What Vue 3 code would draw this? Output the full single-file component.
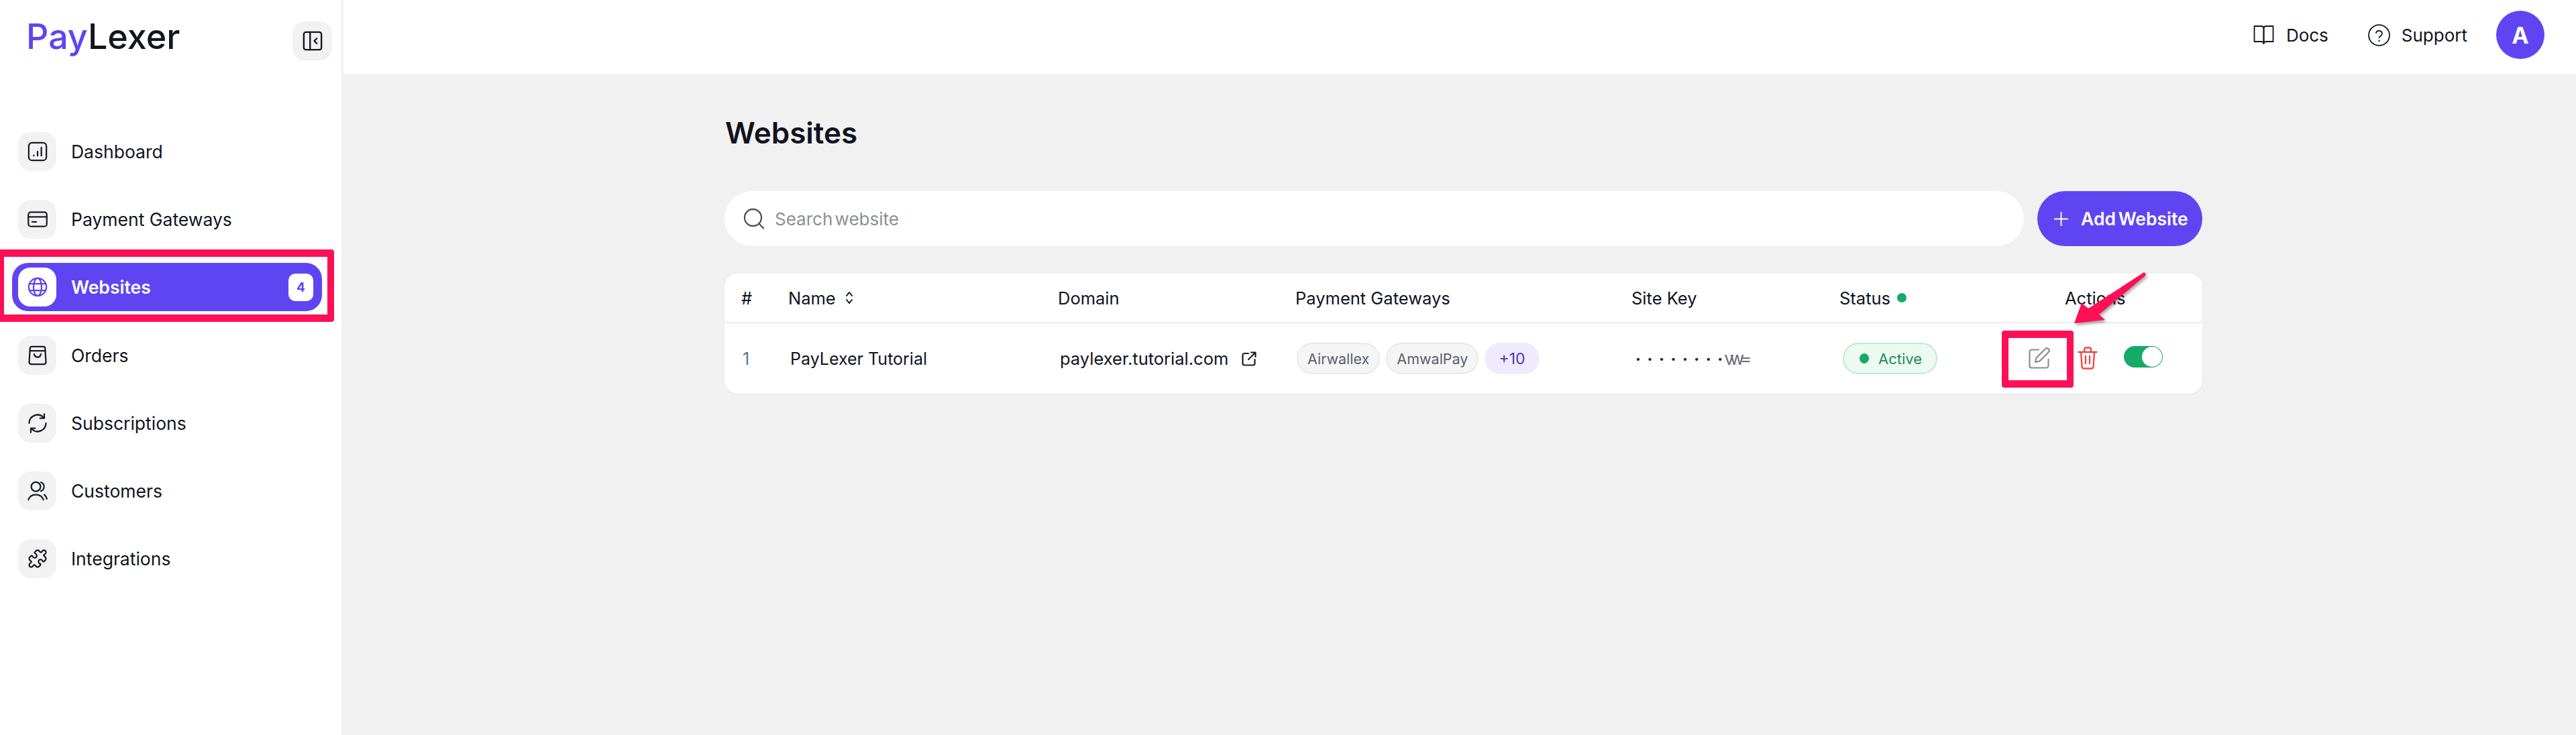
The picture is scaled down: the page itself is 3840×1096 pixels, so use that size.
<script setup>
const navItems = [
  { label: 'Dashboard', icon: 'dash' },
  { label: 'Payment Gateways', icon: 'card' },
  { label: 'Websites', icon: 'globe', active: true, badge: 4 },
  { label: 'Orders', icon: 'bag' },
  { label: 'Subscriptions', icon: 'sync' },
  { label: 'Customers', icon: 'users' },
  { label: 'Integrations', icon: 'puzzle' }
]
</script>

<template>
  <div class="page">
    <aside class="sidebar">
      <div class="brand">
        <div class="logo"><span class="pay">Pay</span>Lexer</div>
        <button class="collapse">
          <svg class="ic30" viewBox="0 0 24 24" fill="none" stroke="currentColor" stroke-width="1.9" stroke-linejoin="round" stroke-linecap="round">
            <rect x="1.5" y="1.5" width="21" height="21" rx="2.5" />
            <path d="M9 1.5v21M17 9l-3 3 3 3" />
          </svg>
        </button>
      </div>
      <nav class="nav">
        <a v-for="item in navItems" :key="item.label" class="nav-item" :class="{ active: item.active }">
          <span class="nav-icon">
            <svg class="ic30" viewBox="0 0 24 24" fill="none" stroke="currentColor" stroke-width="1.8" stroke-linecap="round" stroke-linejoin="round">
              <template v-if="item.icon === 'dash'">
                <rect x="1.5" y="1.5" width="21" height="21" rx="4" />
                <path d="M7.5 17v-.5M12 17v-5M16.5 17V7" />
              </template>
              <template v-else-if="item.icon === 'card'">
                <rect x="1" y="3.5" width="22" height="17" rx="3" />
                <path d="M1 9h22M5.5 15h5" />
              </template>
              <template v-else-if="item.icon === 'globe'">
                <circle cx="12" cy="12" r="10.5" />
                <ellipse cx="12" cy="12" rx="4.8" ry="10.5" />
                <path d="M2.3 8h19.4M2.3 16h19.4" />
              </template>
              <template v-else-if="item.icon === 'bag'">
                <path d="M5 1.5h14a2 2 0 0 1 2 2v.5l1 16a2.5 2.5 0 0 1-2.5 2.5h-15A2.5 2.5 0 0 1 2 20l1-16v-.5a2 2 0 0 1 2-2z" />
                <path d="M3 6.5h18M8 10.5c.6 2.4 2 3.5 4 3.5s3.4-1.100 4-3.500" />
              </template>
              <template v-else-if="item.icon === 'sync'">
                <path d="M2 12a10 10 0 0 1 17-7M22 12a10 10 0 0 1-17 7" />
                <path d="M20 1v5h-5M4 23v-5h5" />
              </template>
              <template v-else-if="item.icon === 'users'">
                <circle cx="10" cy="7" r="5.5" />
                <path d="M16 1.800a5.500 5.500 0 0 1 0 10.400M1 22.500c1.500-4 5-6 9-6s7.500 2 9 6M20 16.500c1.500 1.200 2.500 3 3 5" />
              </template>
              <template v-else>
                <path d="M19.439 7.850c-.049.322.059.648.289.878l1.568 1.568c.47.47.706 1.087.706 1.704s-.235 1.233-.706 1.704l-1.611 1.611a.98.98 0 0 1-.837.276c-.47-.07-.802-.48-.968-.925a2.501 2.501 0 1 0-3.214 3.214c.446.166.855.497.925.968a.979.979 0 0 1-.276.837l-1.610 1.610a2.404 2.404 0 0 1-1.705.707 2.402 2.402 0 0 1-1.704-.706l-1.568-1.568a1.026 1.026 0 0 0-.877-.29c-.493.074-.84.504-1.020.968a2.500 2.500 0 1 1-3.237-3.237c.464-.18.894-.527.967-1.020a1.026 1.026 0 0 0-.289-.877l-1.568-1.568A2.402 2.402 0 0 1 1.998 12c0-.617.236-1.234.706-1.704L4.230 8.770c.24-.24.581-.353.917-.303.515.077.877.528 1.073 1.010a2.500 2.500 0 1 0 3.259-3.259c-.482-.196-.933-.558-1.010-1.073-.05-.336.062-.676.303-.917l1.525-1.525A2.402 2.402 0 0 1 12 1.998c.617 0 1.234.236 1.704.706l1.568 1.568c.23.23.556.338.877.29.493-.074.84-.504 1.020-.968a2.500 2.500 0 1 1 3.237 3.237c-.464.18-.894.527-.967 1.020Z" />
              </template>
            </svg>
          </span>
          <span class="nav-label">{{ item.label }}</span>
          <span v-if="item.badge" class="nav-badge">{{ item.badge }}</span>
        </a>
      </nav>
      <div class="mark mark-nav"></div>
    </aside>

    <div class="right">
      <header class="topbar">
        <a class="top-link">
          <svg class="book" viewBox="0 0 30 30" fill="none" stroke="currentColor" stroke-width="1.8" stroke-linejoin="round" stroke-linecap="round">
            <path d="M1 2h10c2.500 0 4 1.500 4 3.500V28c0-1.500-1.500-3-4-3H1z" />
            <path d="M29 2H19c-2.500 0-4 1.500-4 3.500V28c0-1.500 1.500-3 4-3h10z" />
          </svg>
          Docs
        </a>
        <a class="top-link">
          <svg class="help" viewBox="0 0 32 32" fill="none" stroke="currentColor" stroke-width="1.700" stroke-linecap="round" stroke-linejoin="round">
            <circle cx="16" cy="16" r="15" />
            <path d="M11.500 12.500a4.600 4.600 0 0 1 8.900 1.400c0 3-4.400 3.700-4.400 5.600" />
            <path d="M16 24v.2" stroke-width="2.200" />
          </svg>
          Support
        </a>
        <div class="avatar">A</div>
      </header>

      <main class="content">
        <h1 class="title">Websites</h1>
        <div class="toolbar">
          <div class="search">
            <svg class="search-ic" viewBox="0 0 32 32" fill="none" stroke="currentColor" stroke-width="2.300" stroke-linecap="round">
              <circle cx="14.500" cy="14.500" r="12.500" />
              <path d="M24 24l6 6.500" />
            </svg>
            <span class="placeholder">Search website</span>
          </div>
          <button class="add">
            <svg class="plus" viewBox="0 0 22 22" fill="none" stroke="currentColor" stroke-width="2"><path d="M11 0v22M0 11h22" /></svg>
            Add Website
          </button>
        </div>

        <section class="table">
          <div class="thead">
            <span>#</span>
            <span class="name-h">Name
              <svg class="sort" viewBox="0 0 12 20" fill="none" stroke="currentColor" stroke-width="2" stroke-linecap="round" stroke-linejoin="round"><path d="M2 7l4-5 4 5M2 13l4 5 4-5" /></svg>
            </span>
            <span>Domain</span>
            <span>Payment Gateways</span>
            <span>Site Key</span>
            <span class="status-h">Status <i class="dot"></i></span>
            <span>Actions</span>
          </div>
          <div class="trow">
            <span class="idx">1</span>
            <span>PayLexer Tutorial</span>
            <span class="domain">paylexer.tutorial.com
              <svg class="ext" viewBox="0 0 22 22" fill="none" stroke="currentColor" stroke-width="2.200" stroke-linecap="round" stroke-linejoin="round">
                <path d="M10 3H4a2.500 2.500 0 0 0-2.500 2.500V18A2.500 2.500 0 0 0 4 20.500h13a2.500 2.500 0 0 0 2.500-2.500v-6" />
                <path d="M10 12L20 2M14 1.500h6.500V8" />
              </svg>
            </span>
            <span class="chips">
              <span class="chip">Airwallex</span>
              <span class="chip">AmwalPay</span>
              <span class="chip more">+10</span>
            </span>
            <span class="key">
              <span class="key-dots">•••••••</span><span class="key-last">•</span><span class="key-end">vw=</span>
            </span>
            <span><span class="active-chip"><i class="adot"></i>Active</span></span>
            <span class="actions">
              <svg class="edit" viewBox="0 0 32 32" fill="none" stroke="currentColor" stroke-width="2.100" stroke-linecap="round" stroke-linejoin="round">
                <path d="M15 3.500H4.500a3 3 0 0 0-3 3v21a3 3 0 0 0 3 3h22a3 3 0 0 0 3-3V18" />
                <path d="M25 2.200a3.400 3.400 0 0 1 4.800 4.800L16.500 20.500l-6.500 1.600 1.600-6.500z" />
              </svg>
              <svg class="trash" viewBox="0 0 30 34" fill="none" stroke="currentColor" stroke-width="2.300" stroke-linecap="round" stroke-linejoin="round">
                <path d="M1.500 8h27M10 8V4a2.500 2.500 0 0 1 2.500-2.500h5A2.500 2.500 0 0 1 20 4v4M5 8l1.500 22a3 3 0 0 0 3 2.500h11a3 3 0 0 0 3-2.500L25 8M12 14v11M18 14v11" />
              </svg>
              <span class="toggle"><i class="knob"></i></span>
            </span>
          </div>
        </section>
      </main>

      <div class="mark mark-edit"></div>
      <svg class="arrow" viewBox="0 0 120 90">
        <path class="arrow-shape" d="M4 80 L15 50 L25 58 L108 4 Q112 6 110 9 L41 67 L50 75 Z" />
      </svg>
    </div>
  </div>
</template>

<style>
html, body { margin: 0; background: #f1f1f1; }
</style>

<style scoped>
.page {
  display: flex;
  width: 3840px;
  height: 1096px;
  overflow: hidden;
  background: #f1f1f1;
  font-family: Inter, "Liberation Sans", sans-serif;
  color: #10141f;
}
.sidebar {
  position: relative;
  width: 509px;
  flex: none;
  background: #fff;
  border-right: 3px solid #eef0f2;
  box-sizing: content-box;
}
.brand {
  display: flex;
  align-items: flex-start;
  justify-content: space-between;
  height: 58px;
  padding: 32px 14px 0 39px;
}
.logo {
  margin-top: -6px;
  font-size: 52px;
  line-height: 58px;
  font-weight: 500;
  color: #14161d;
}
.pay { color: #5f45f2; }
.collapse {
  width: 59px;
  height: 58px;
  display: flex;
  align-items: center;
  justify-content: center;
  border: 0;
  padding: 0;
  border-radius: 18px;
  background: #f2f2f2;
  color: #14161d;
}
.ic30 { width: 30px; height: 30px; display: block; }
.nav {
  display: flex;
  flex-direction: column;
  gap: 29.200px;
  margin-top: 100px;
  padding: 0 29px 0 18px;
}
.nav-item {
  display: flex;
  align-items: center;
  height: 72px;
  padding: 0 13px 0 9px;
  border-radius: 24px;
  color: #10141f;
  font-size: 26.500px;
}
.nav-icon {
  width: 57px;
  height: 58px;
  flex: none;
  display: flex;
  align-items: center;
  justify-content: center;
  background: #f2f2f2;
  border-radius: 18px;
  color: #1a1d24;
  margin-right: 22px;
}
.nav-label { flex: 1; }
.nav-item.active {
  background: #5f45f2;
  color: #fff;
  font-weight: 600;
}
.active .nav-icon { background: #fff; color: #5f45f2; }
.nav-badge {
  width: 37px;
  height: 41px;
  display: flex;
  align-items: center;
  justify-content: center;
  background: #fff;
  color: #5f45f2;
  border-radius: 10px;
  font-size: 19px;
  font-weight: 700;
}
.mark {
  position: absolute;
  box-sizing: border-box;
  border: solid #ff0f55;
  border-radius: 4px;
}
.mark-nav {
  left: -4px;
  top: 372px;
  width: 502px;
  height: 108px;
  border-width: 11px 10px;
}
.right {
  position: relative;
  flex: 1;
  min-width: 0;
}
.topbar {
  height: 110px;
  box-sizing: border-box;
  padding: 0 47px 6px 0;
  background: #fff;
  display: flex;
  align-items: center;
  justify-content: flex-end;
}
.top-link {
  display: flex;
  align-items: center;
  font-size: 26px;
  color: #10141f;
}
.book { width: 31px; height: 30px; margin-right: 18px; }
.help { width: 33px; height: 33px; margin: 0 17px 0 59px; }
.avatar {
  width: 72px;
  height: 72px;
  margin-left: 43px;
  border-radius: 50%;
  background: #5f45f2;
  color: #fff;
  display: flex;
  align-items: center;
  justify-content: center;
  font-size: 34px;
  font-weight: 700;
}
.content {
  width: 2203px;
  margin-left: 568px;
}
.title {
  margin: 0;
  padding-top: 58px;
  height: 117px;
  box-sizing: border-box;
  font-size: 44px;
  line-height: 60px;
  font-weight: 600;
  padding-left: 1px;
  color: #10141f;
}
.toolbar {
  display: flex;
  gap: 20px;
  height: 82px;
  margin-top: 58px;
}
.search {
  flex: 1;
  display: flex;
  align-items: center;
  background: #fff;
  border-radius: 41px;
  padding-left: 28px;
}
.search-ic { width: 32px; height: 32px; color: #4f535a; margin-right: 15px; }
.placeholder { font-size: 26px; word-spacing: -4px; color: #8b8f97; }
.add {
  width: 246px;
  flex: none;
  display: flex;
  align-items: center;
  border: 0;
  padding: 0 0 0 25px;
  border-radius: 41px;
  background: #5f45f2;
  color: #fff;
  font-family: inherit;
  font-size: 26.500px;
  font-weight: 600;
  word-spacing: -3px;
  white-space: nowrap;
}
.plus { width: 21px; height: 21px; margin-right: 19px; flex: none; }
.table {
  margin-top: 41px;
  height: 179px;
  background: #fff;
  border-radius: 20px;
  box-shadow: 0 1px 3px rgba(0, 0, 0, 0.05);
  font-size: 25px;
}
.thead, .trow { display: grid; align-items: center; white-space: nowrap; }
.thead {
  grid-template-columns: 70px 402px 354px 501px 310px 336px 1fr;
  height: 72px;
  padding-left: 25px;
  border-bottom: 2px solid #ececec;
  font-size: 25.500px;
}
.trow {
  grid-template-columns: 71px 402px 353px 505px 309px 277px 1fr;
  height: 105px;
  padding-left: 27px;
}
.name-h { display: flex; align-items: center; }
.sort { width: 12px; height: 20px; margin-left: 14px; }
.status-h { display: flex; align-items: center; gap: 10px; }
.dot { width: 14px; height: 14px; border-radius: 50%; background: #14ab68; }
.idx { color: #5a7592; }
.domain { display: flex; align-items: center; font-size: 25.500px; }
.ext { width: 22px; height: 22px; margin-left: 20px; color: #1a1d24; }
.chips { display: flex; align-items: center; gap: 9px; }
.chip {
  height: 47px;
  box-sizing: border-box;
  padding: 0 14px;
  display: flex;
  align-items: center;
  border: 2px solid #e9e9e9;
  border-radius: 24px;
  background: #f5f5f5;
  font-size: 21.500px;
  color: #5d6068;
}
.chip.more {
  border: 0;
  background: #efebfd;
  color: #4f35b8;
  font-size: 23px;
  padding: 0 21px;
}
.key { display: flex; align-items: center; }
.key-dots { font-size: 14px; letter-spacing: 9.600px; color: #1d2b44; }
.key-last { font-size: 14px; color: #1d2b44; }
.key-end { font-size: 26px; letter-spacing: -6px; color: #6a6e76; margin-left: 2px; }
.active-chip {
  display: inline-flex;
  align-items: center;
  height: 47px;
  width: 141px;
  box-sizing: border-box;
  padding-left: 23px;
  background: #ecfaf2;
  border: 2px solid #b9eccd;
  border-radius: 24px;
  color: #1f8a5c;
  font-size: 22px;
}
.adot { width: 14px; height: 15px; margin-right: 14px; border-radius: 50%; background: #14ab68; }
.actions { display: flex; align-items: center; }
.edit { width: 32px; height: 32px; color: #8a8a8a; margin-top: -2px; }
.trash { width: 30px; height: 34px; color: #ef4444; margin: -2px 0 0 41px; }
.toggle {
  width: 58px;
  height: 32px;
  margin: -6px 0 0 39px;
  padding: 1px;
  box-sizing: border-box;
  display: flex;
  justify-content: flex-end;
  border-radius: 16px;
  background: #14ab68;
}
.knob { width: 30px; height: 30px; border-radius: 50%; background: #fff; }
.mark-edit {
  left: 2472px;
  top: 493px;
  width: 107px;
  height: 85px;
  border-width: 11px 10px;
}
.arrow {
  position: absolute;
  left: 2576px;
  top: 402px;
  width: 120px;
  height: 90px;
  overflow: visible;
}
.arrow-shape {
  fill: #ff0f55;
  filter: drop-shadow(2px 3px 2px rgba(0, 0, 0, 0.35));
}
</style>
